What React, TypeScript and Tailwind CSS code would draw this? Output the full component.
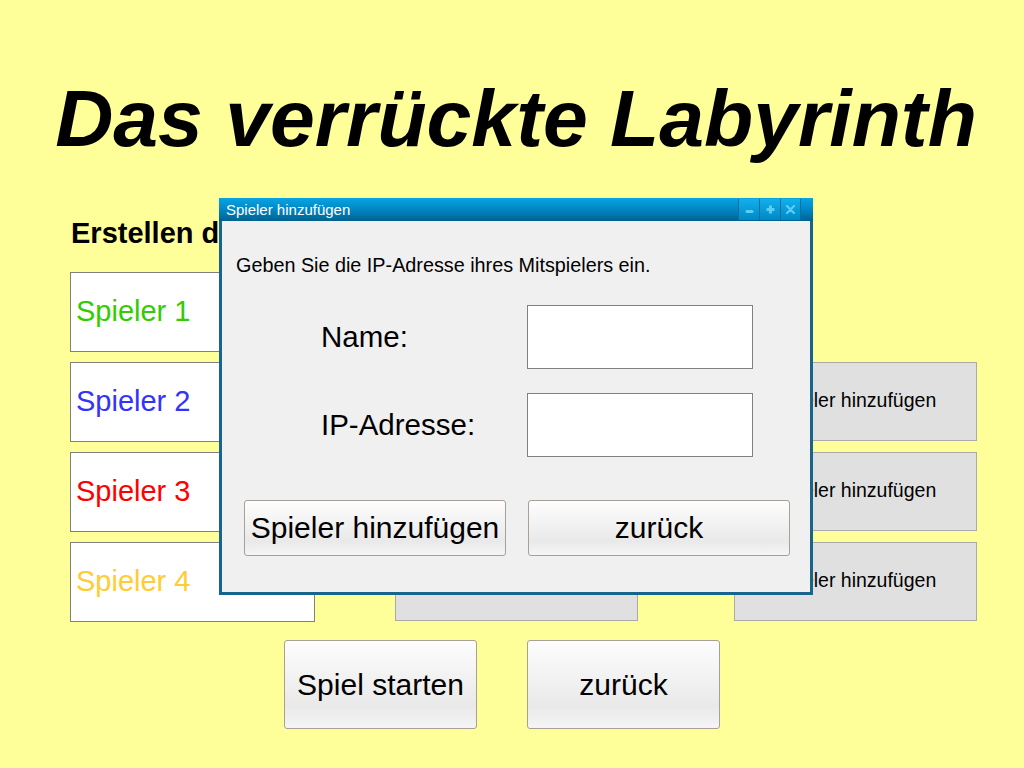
import React from 'react'

const players = [
	{ label: 'Spieler 1', color: 'text-[#33cc00]', extra: false },
	{ label: 'Spieler 2', color: 'text-[#3333ff]', extra: true },
	{ label: 'Spieler 3', color: 'text-[#ff0000]', extra: true },
	{ label: 'Spieler 4', color: 'text-[#ffcc33]', extra: true },
]

const btn =
	'flex items-center justify-center border border-[#a89f96] rounded-[3px] bg-[linear-gradient(to_bottom,#fdfdfd,#e9e9e9_75%,#f5f5f5)] text-black'

function AddPlayerDialog() {
	return (
		<div className="absolute left-[219px] top-[198px] w-[594px] h-[397px] bg-[#17648d] flex flex-col px-[3px] pb-[3px]">
			{/* Title bar */}
			<div className="h-[23px] -mx-[3px] flex items-center pl-[7px] pr-[12px] bg-[linear-gradient(to_bottom,#07a4e4,#0083c0_55%,#00628e)]">
				<span className="text-white text-[15px] leading-none">Spieler hinzufügen</span>
				<div className="ml-auto flex h-[21px] self-start mt-px">
					<div className="w-[21px] h-full border-l border-[#0b6f9e] flex items-center justify-center bg-[linear-gradient(to_bottom,#12b0ec,#0088c4)]">
						<svg width="9" height="9" viewBox="0 0 9 9">
							<rect x="0.5" y="5" width="8" height="3" rx="1.5" fill="#5ccdf2" />
						</svg>
					</div>
					<div className="w-[21px] h-full border-l border-[#0b6f9e] flex items-center justify-center bg-[linear-gradient(to_bottom,#12b0ec,#0088c4)]">
						<svg width="9" height="9" viewBox="0 0 9 9">
							<path d="M3 0.5h3v2.5h2.5v3H6v2.5H3V6H0.5V3H3z" fill="#5ccdf2" />
						</svg>
					</div>
					<div className="w-[21px] h-full border-l border-r border-[#0b6f9e] flex items-center justify-center bg-[linear-gradient(to_bottom,#12b0ec,#0088c4)]">
						<svg width="9" height="9" viewBox="0 0 9 9">
							<path d="M1 1L8 8M8 1L1 8" stroke="#5ccdf2" strokeWidth="2.2" strokeLinecap="round" />
						</svg>
					</div>
				</div>
			</div>

			{/* Body */}
			<div className="flex-1 bg-[#f0f0f0] flex flex-col">
				<p className="mt-[35px] pl-[14px] text-[19.8px] leading-none text-black">
					Geben Sie die IP-Adresse ihres Mitspielers ein.
				</p>
				<div className="mt-[29px] flex items-center pl-[99px]">
					<span className="w-[206px] text-[29.5px] leading-none text-black">Name:</span>
					<div className="w-[226px] h-[64px] bg-white border border-[#808080]" />
				</div>
				<div className="mt-[24px] flex items-center pl-[99px]">
					<span className="w-[206px] text-[29.5px] leading-none text-black">IP-Adresse:</span>
					<div className="w-[226px] h-[64px] bg-white border border-[#808080]" />
				</div>
				<div className="mt-[43px] flex gap-[22px] pl-[22px]">
					<button className={`${btn} w-[262px] h-[56px] text-[30px]`}>Spieler hinzufügen</button>
					<button className={`${btn} w-[262px] h-[56px] text-[30px]`}>zurück</button>
				</div>
			</div>
		</div>
	)
}

export default function App() {
	return (
		<div className="relative w-[1024px] h-[768px] overflow-hidden bg-[#ffff99] font-['Liberation_Sans',Arial,sans-serif]">
			<h1 className="pt-[78px] pl-[8px] text-center text-[80.5px] leading-none font-bold italic text-black">
				Das verrückte Labyrinth
			</h1>

			<h2 className="mt-[60px] ml-[71px] text-[29px] leading-none font-bold text-black">
				Erstellen des Spiels
			</h2>

			{/* Player rows */}
			<div className="mt-[24px] flex flex-col gap-[10px]">
				{players.map((p) => (
					<div key={p.label} className="flex h-[80px]">
						<div className="ml-[70px] w-[245px] h-full bg-white border border-[#808080] flex items-center pl-[5px]">
							<span className={`text-[29px] leading-none ${p.color}`}>{p.label}</span>
						</div>
						{p.extra && (
							<>
								<div className="ml-[80px] w-[243px] h-[79px] bg-[#e0e0e0] border border-[#aaaaaa]" />
								<div className="ml-[96px] w-[243px] h-[79px] bg-[#e0e0e0] border border-[#aaaaaa] flex items-center justify-center">
									<span className="text-[19.5px] leading-none text-black">Spieler hinzufügen</span>
								</div>
							</>
						)}
					</div>
				))}
			</div>

			{/* Bottom buttons */}
			<div className="mt-[18px] ml-[284px] flex gap-[50px]">
				<button className={`${btn} w-[193px] h-[89px] text-[30px]`}>Spiel starten</button>
				<button className={`${btn} w-[193px] h-[89px] text-[30px]`}>zurück</button>
			</div>

			<AddPlayerDialog />
		</div>
	)
}
